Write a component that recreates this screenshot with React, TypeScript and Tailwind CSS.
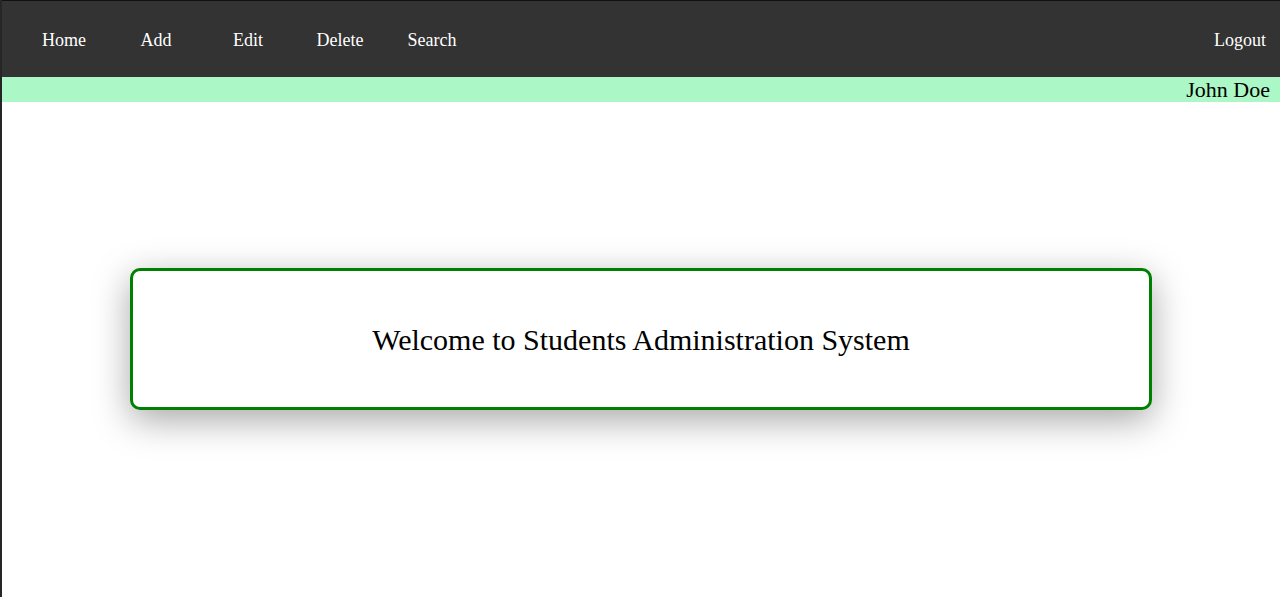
import React from 'react';

const links = ['Home', 'Add', 'Edit', 'Delete', 'Search'];

export default function App() {
  return (
    <div className="min-h-[597px] border-l-2 border-[#262626] bg-white font-['Liberation_Serif',serif]">
      {/* top nav */}
      <nav className="flex h-[77px] items-center justify-between border-t border-[#111] bg-[#333333] pl-[16px] pr-[14px] pt-[2px]">
        <ul className="flex">
          {links.map(l => (
            <li key={l} className="w-[92px] text-center text-[18px] text-white">
              {l}
            </li>
          ))}
        </ul>
        <span className="text-[18px] text-white">Logout</span>
      </nav>

      {/* user strip */}
      <div className="flex h-[25px] items-center justify-end bg-[#abf7c5] pr-[10px] text-[22px] leading-none text-black">
        John Doe
      </div>

      {/* welcome card */}
      <div className="px-[10%] pt-[166px]">
        <div className="flex h-[142px] items-center justify-center rounded-[10px] border-[3px] border-[#008000] bg-white shadow-[0_10px_36px_rgba(0,0,0,0.35)]">
          <h1 className="text-[30px] text-black">Welcome to Students Administration System</h1>
        </div>
      </div>
    </div>
  );
}
